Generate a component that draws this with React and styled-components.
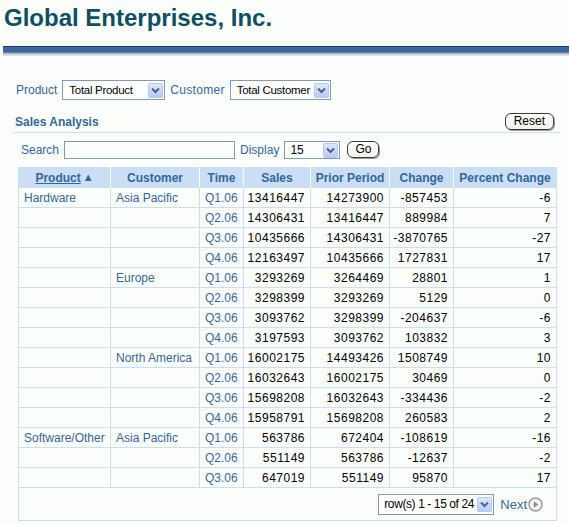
import React from 'react';
import styled, { createGlobalStyle } from 'styled-components';

// Colours of the page
const colors = {
	page: '#fcfefc',
	title: '#0f4f63',
	label: '#336699',
	head: '#cadff5',
	line: '#cadff5',
	field: '#7f9db9',
	text: '#000000',
};

const GlobalStyle = createGlobalStyle`
	body {
		margin: 0;
		background: ${colors.page};
		font-family: "Liberation Sans", Arial, sans-serif;
		font-size: 12px;
	}
`;

const rows = [
	['Hardware', 'Asia Pacific', 'Q1.06', '13416447', '14273900', '-857453', '-6'],
	['', '', 'Q2.06', '14306431', '13416447', '889984', '7'],
	['', '', 'Q3.06', '10435666', '14306431', '-3870765', '-27'],
	['', '', 'Q4.06', '12163497', '10435666', '1727831', '17'],
	['', 'Europe', 'Q1.06', '3293269', '3264469', '28801', '1'],
	['', '', 'Q2.06', '3298399', '3293269', '5129', '0'],
	['', '', 'Q3.06', '3093762', '3298399', '-204637', '-6'],
	['', '', 'Q4.06', '3197593', '3093762', '103832', '3'],
	['', 'North America', 'Q1.06', '16002175', '14493426', '1508749', '10'],
	['', '', 'Q2.06', '16032643', '16002175', '30469', '0'],
	['', '', 'Q3.06', '15698208', '16032643', '-334436', '-2'],
	['', '', 'Q4.06', '15958791', '15698208', '260583', '2'],
	['Software/Other', 'Asia Pacific', 'Q1.06', '563786', '672404', '-108619', '-16'],
	['', '', 'Q2.06', '551149', '563786', '-12637', '-2'],
	['', '', 'Q3.06', '647019', '551149', '95870', '17'],
];

const widths = [92, 89, 44, 67, 79, 64, 103];

const Page = styled.div`
	width: 569px;
	height: 525px;
	overflow: hidden;
`;

const Title = styled.h1`
	margin: 0;
	padding: 5px 0 0 4px;
	height: 41px;
	font-size: 24px;
	line-height: 26px;
	font-weight: bold;
	color: ${colors.title};
`;

const Bar = styled.div`
	margin-left: 3px;
	height: 10px;
	background: linear-gradient(
		to bottom,
		#1d3d78 0px,
		#1d3d78 1px,
		#3a68a3 1px,
		#3a68a3 6px,
		#56739a 6px,
		#a99a8a 7px,
		#b8b2a8 8px,
		#cfe0f3 8px,
		#cfe0f3 10px
	);
`;

const Content = styled.div`
	padding: 24px 9px 0 13px;
`;

const FilterRow = styled.div`
	display: flex;
	align-items: center;
	gap: 5px;
	padding-left: 3px;
	height: 20px;
`;

const Label = styled.span`
	color: ${colors.label};
	font-size: 12px;
	white-space: nowrap;
	letter-spacing: ${({ $ls }) => $ls || 0}px;
`;

const Select = styled.div`
	display: flex;
	align-items: center;
	justify-content: space-between;
	box-sizing: border-box;
	width: ${({ $w }) => $w}px;
	height: ${({ $h }) => $h || 19}px;
	border: 1px solid ${colors.field};
	background: #fff;
	padding: 0 1px 0 ${({ $pl }) => $pl || 5}px;
	font-size: ${({ $fs }) => $fs || 12}px;
	color: ${colors.text};
	white-space: nowrap;
	overflow: hidden;
	letter-spacing: ${({ $ls }) => $ls || 0}px;
`;

const ArrowBox = styled.span`
	display: flex;
	align-items: center;
	justify-content: center;
	flex-shrink: 0;
	width: 15px;
	height: 15px;
	box-sizing: border-box;
	border: 1px solid #b5c8f2;
	border-radius: 2px;
	background: linear-gradient(to bottom, #dfe8fd, #b6cbf7);
`;

const Chevron = () => (
	<ArrowBox>
		<svg width="9" height="7" viewBox="0 0 9 7">
			<path d="M1 1.5 L4.5 5 L8 1.5" fill="none" stroke="#4d6185" strokeWidth="2" />
		</svg>
	</ArrowBox>
);

const SectionHead = styled.div`
	display: flex;
	align-items: flex-end;
	justify-content: space-between;
	margin-top: 13px;
	height: 18px;
	border-bottom: 1px solid ${colors.line};
	padding: 0 6px 1px 2px;
`;

const SectionTitle = styled.span`
	color: ${colors.label};
	font-weight: bold;
	font-size: 12px;
	padding-bottom: 2px;
`;

const Button = styled.button`
	font-family: "Liberation Sans", Arial, sans-serif;
	font-size: 12px;
	color: #000;
	height: 17px;
	padding: 0 ${({ $pad }) => $pad || 8}px;
	margin: 0 0 1px ${({ $left }) => $left || 0}px;
	border: 1px solid #3c3c3c;
	border-radius: 6px;
	background: linear-gradient(to bottom, #ffffff, #f1f1ec);
	box-shadow: 1px 1px 0 #9a9a9a;
	line-height: 15px;
`;

const SearchRow = styled.div`
	display: flex;
	align-items: center;
	gap: 5px;
	margin-top: 8px;
	padding-left: 8px;
	height: 18px;
`;

const Input = styled.div`
	box-sizing: border-box;
	width: 171px;
	height: 18px;
	border: 1px solid ${colors.field};
	background: #fff;
`;

const Table = styled.table`
	margin: 8px 0 0 5px;
	border-collapse: collapse;
	table-layout: fixed;
	width: 538px;
	border: 1px solid ${colors.line};
`;

const Th = styled.th`
	background: ${colors.head};
	color: ${colors.label};
	font-weight: bold;
	font-size: 12px;
	height: 19px;
	padding: 0;
	text-align: center;
	border-left: 1px solid #ffffff;
	&:first-child {
		border-left: 1px solid ${colors.head};
	}
`;

const SortLink = styled.span`
	text-decoration: underline;
`;

const SortArrow = styled.span`
	font-size: 11px;
	margin-left: 2px;
	vertical-align: 1px;
`;

const Td = styled.td`
	height: 19px;
	padding: 0 5px 0 ${({ $num }) => ($num ? 0 : 5)}px;
	border: 1px solid ${colors.line};
	text-align: ${({ $num }) => ($num ? 'right' : 'left')};
	color: ${({ $num }) => ($num ? colors.text : colors.label)};
	font-size: 12px;
	letter-spacing: ${({ $num }) => ($num ? '0.5px' : '0')};
	white-space: nowrap;
`;

const FooterCell = styled.td`
	height: 32px;
	padding: 0 13px 0 0;
	border: 1px solid ${colors.line};
`;

const Pager = styled.div`
	display: flex;
	align-items: center;
	justify-content: flex-end;
	gap: 6px;
`;

const NextLink = styled.span`
	display: flex;
	align-items: center;
	gap: 1px;
	color: ${colors.label};
	font-size: 13px;
`;

const NextIcon = () => (
	<svg width="15" height="15" viewBox="0 0 15 15">
		<circle cx="7.5" cy="7.5" r="6.5" fill="#f4f4f4" stroke="#9c9c9c" strokeWidth="1.5" />
		<path d="M5.8 4.2 L10.3 7.5 L5.8 10.8 Z" fill="#8e8e8e" />
	</svg>
);

const headers = ['Product', 'Customer', 'Time', 'Sales', 'Prior Period', 'Change', 'Percent Change'];

const App = () => {
	return (
		<Page>
			<GlobalStyle />
			<Title>Global Enterprises, Inc.</Title>
			<Bar />
			<Content>
				<FilterRow>
					<Label>Product</Label>
					<Select $w={103} $h={20} $fs={11.5} $pl={6} $ls={-0.3}>
						Total Product
						<Chevron />
					</Select>
					<Label $ls={0.3}>Customer</Label>
					<Select $w={101} $h={20} $fs={11.5} $pl={6} $ls={-0.3}>
						Total Customer
						<Chevron />
					</Select>
				</FilterRow>

				<SectionHead>
					<SectionTitle>Sales Analysis</SectionTitle>
					<Button>Reset</Button>
				</SectionHead>

				<SearchRow>
					<Label>Search</Label>
					<Input />
					<Label>Display</Label>
					<Select $w={56} $h={18}>
						15
						<Chevron />
					</Select>
					<Button $pad={7} $left={2}>Go</Button>
				</SearchRow>

				<Table>
					<colgroup>
						{widths.map((w, i) => (
							<col key={i} style={{ width: w }} />
						))}
					</colgroup>
					<thead>
						<tr>
							{headers.map((h, i) => (
								<Th key={h}>
									{i === 0 ? (
										<>
											<SortLink>{h}</SortLink>
											<SortArrow>▲</SortArrow>
										</>
									) : (
										h
									)}
								</Th>
							))}
						</tr>
					</thead>
					<tbody>
						{rows.map((r, ri) => (
							<tr key={ri}>
								{r.map((c, ci) => (
									<Td key={ci} $num={ci > 2}>
										{c}
									</Td>
								))}
							</tr>
						))}
						<tr>
							<FooterCell colSpan={7}>
								<Pager>
									<Select $w={116} $h={21} $ls={-0.4}>
										row(s) 1 - 15 of 24
										<Chevron />
									</Select>
									<NextLink>
										Next
										<NextIcon />
									</NextLink>
								</Pager>
							</FooterCell>
						</tr>
					</tbody>
				</Table>
			</Content>
		</Page>
	);
};

export default App;
